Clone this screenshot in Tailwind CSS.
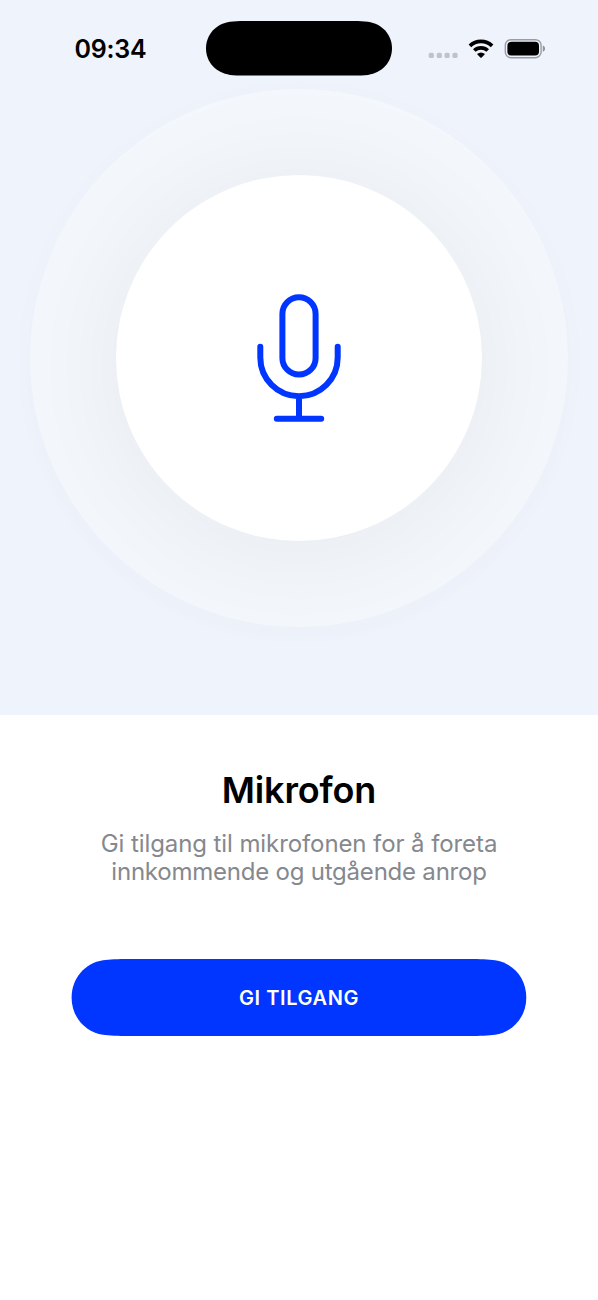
<!DOCTYPE html>
<html lang="nb">
<head>
<meta charset="utf-8">
<meta name="viewport" content="width=device-width, initial-scale=1">
<title>Mikrofon</title>
<script src="https://cdn.jsdelivr.net/npm/@tailwindcss/browser@4"></script>
</head>
<body class="bg-white font-[Inter,sans-serif]">
<main class="flex h-[1300px] w-[598px] flex-col items-center overflow-hidden bg-white">
  <section class="flex h-[715px] w-full flex-col items-center overflow-hidden bg-[#eef3fc]">
    <header class="grid h-[88.5px] w-full shrink-0 grid-cols-[206px_186px_206px] pt-[21px]">
      <div class="flex h-[57px] items-center pl-[74.5px] text-[25px] font-semibold leading-none tracking-[-0.2px] text-black"><span class="whitespace-nowrap">09:34</span></div>
      <svg class="block h-[55px] w-[186px]" viewBox="0 0 186 55" aria-hidden="true"><path d="M38 0H148C153 0 158 .2 162 .7C176 2.7 186 13.5 186 27.3S176 51.9 162 53.9C158 54.4 153 54.6 148 54.6H38C33 54.6 28 54.4 24 53.9C10 51.9 0 41.1 0 27.3S10 2.7 24 .7C28 .2 33 0 38 0Z"/></svg>
      <svg class="ml-[36px] block h-[55px] w-[122px]" viewBox="0 0 122 55" aria-hidden="true">
        <g fill="#c0c3cb"><rect x=".7" y="31.8" width="5.2" height="5.2" rx="1.6"/><rect x="8.7" y="31.8" width="5.2" height="5.2" rx="1.6"/><rect x="16.5" y="31.8" width="5.2" height="5.2" rx="1.6"/><rect x="24.4" y="31.8" width="5.2" height="5.2" rx="1.6"/></g>
        <g fill="none" stroke="#000" stroke-width="3.7"><path d="M41.9 24.9A15.9 15.9 0 0 1 64.1 24.9"/><path d="M46.3 29.5A9.6 9.6 0 0 1 59.7 29.5"/></g>
        <path d="M49 33Q53 29.8 57 33L53.7 36.5Q53 37.1 52.3 36.5Z"/>
        <rect x="77.3" y="18.7" width="35.8" height="18" rx="5.7" fill="none" stroke="#999ca2" stroke-width="1.4"/>
        <rect x="79.4" y="20.8" width="31.6" height="13.8" rx="4"/>
        <path d="M114.8 24.6C117.8 25.8 117.8 29.6 114.8 30.8Z" fill="#8f9297"/>
      </svg>
    </header>
    <div class="flex size-[538px] shrink-0 items-center justify-center rounded-full bg-[#f4f7fc] shadow-[0_4px_60px_rgba(0,0,60,0.01)]">
      <div class="flex size-[366px] items-center justify-center rounded-full bg-white shadow-[0_8px_130px_rgba(0,0,0,0.065)]">
        <svg class="h-[160px] w-[120px]" viewBox="239 277.5 120 160" fill="none" stroke="#0036ff" stroke-width="6" stroke-linecap="round" aria-label="Mikrofon">
          <rect x="282.4" y="296.8" width="33.2" height="77.2" rx="16.6"/>
          <path d="M260.3 346.3V357A38.7 38.7 0 0 0 337.7 357V346.3M299 396V418M276.8 418.2H321.2"/>
        </svg>
      </div>
    </div>
  </section>
  <section class="flex w-full flex-col items-center pt-[53px] text-center">
    <h1 class="text-[36px] font-semibold leading-[44px] tracking-[-0.15px] text-black">Mikrofon</h1>
    <p class="mt-[18px] whitespace-nowrap text-[24px] leading-[28px] text-[#85888d]"><span class="tracking-[-0.09px]">Gi tilgang til mikrofonen for å foreta</span><br><span class="tracking-[-0.22px]">innkommende og utgående anrop</span></p>
    <button class="mt-[73px] grid h-[77px] w-[456px] place-items-center">
      <svg class="col-start-1 row-start-1 h-[77px] w-[456px]" viewBox="0 0 456 77" fill="#0036ff" aria-hidden="true"><path d="M58 0H398C409 0 418 .4 424 1.2C442 4 455.3 19 455.3 38.5S442 73 424 75.8C418 76.6 409 77 398 77H58C47 77 38 76.6 32 75.8C14 73 .6 58 .6 38.5S14 4 32 1.2C38 .4 47 0 58 0Z"/></svg>
      <span class="z-10 col-start-1 row-start-1 text-[20px] font-semibold leading-6 tracking-[0.6px] text-white">GI TILGANG</span>
    </button>
  </section>
</main>
</body>
</html>
